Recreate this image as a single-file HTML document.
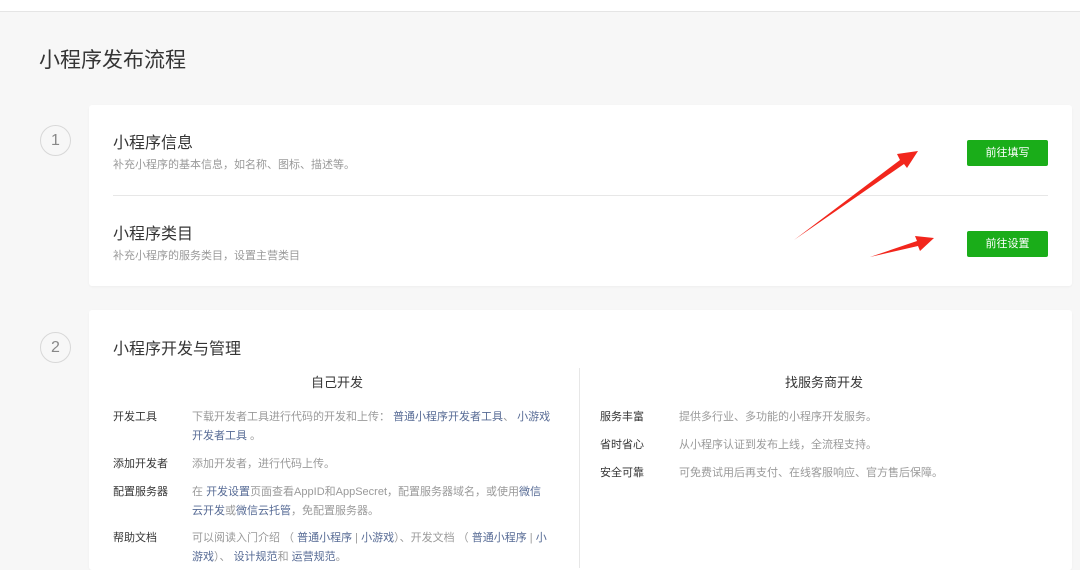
<!DOCTYPE html>
<html><head><meta charset="utf-8"><style>
*{margin:0;padding:0;box-sizing:border-box}
body{width:1080px;height:555px;overflow:hidden;background:#f7f7f7;font-family:"Liberation Sans","Noto Sans CJK SC",sans-serif;position:relative;color:#353535}
.top{position:absolute;left:0;top:0;width:1080px;height:12px;background:#fff;border-bottom:1px solid #e5e5e5}
h1{position:absolute;left:39px;top:44px;font-size:21px;font-weight:normal;color:#353535}
.num{position:absolute;left:40px;width:31px;height:31px;border:1px solid #d8d8d8;border-radius:50%;text-align:center;line-height:29px;font-size:16px;color:#888;background:#f7f7f7}
.card{position:absolute;left:89px;width:983px;background:#fff;border-radius:3px;box-shadow:0 1px 2px rgba(0,0,0,.04)}
.t{position:absolute;font-size:16px;color:#353535}
.d{position:absolute;font-size:11px;color:#9a9a9a}
.btn{position:absolute;left:878px;width:81px;height:26px;background:#1aad19;color:#fff;font-size:11px;text-align:center;line-height:26px;border-radius:2px}
.s{position:absolute;font-size:11px;color:#353535;line-height:19px}
.g{position:absolute;font-size:11px;color:#9a9a9a;line-height:19px}
a{color:#576b95;text-decoration:none}
</style></head><body>
<div class="top"></div>
<h1>小程序发布流程</h1>
<div class="num" style="top:125px">1</div>
<div class="num" style="top:332px">2</div>
<div class="card" style="top:105px;height:181px">
 <div class="t" style="left:24px;top:24px">小程序信息</div>
 <div class="d" style="left:24px;top:51px">补充小程序的基本信息，如名称、图标、描述等。</div>
 <div class="btn" style="top:35px">前往填写</div>
 <div style="position:absolute;left:24px;right:24px;top:90px;border-top:1px solid #e7e7e7"></div>
 <div class="t" style="left:24px;top:115px">小程序类目</div>
 <div class="d" style="left:24px;top:142px">补充小程序的服务类目，设置主营类目</div>
 <div class="btn" style="top:126px">前往设置</div>
</div>
<div class="card" style="top:310px;height:260px">
 <div class="t" style="left:24px;top:25px">小程序开发与管理</div>
 <div style="position:absolute;left:490px;top:58px;height:200px;border-left:1px solid #e7e7e7"></div>
 <div style="position:absolute;left:222px;top:62px;font-size:13px">自己开发</div>
 <div style="position:absolute;left:696px;top:62px;font-size:13px">找服务商开发</div>
 <div class="s" style="left:24px;top:98px">开发工具</div>
 <div class="g" style="left:103px;top:98px;width:362px">下载开发者工具进行代码的开发和上传： <a>普通小程序开发者工具</a>、 <a>小游戏开发者工具</a> 。</div>
 <div class="s" style="left:24px;top:145px">添加开发者</div>
 <div class="g" style="left:103px;top:145px">添加开发者，进行代码上传。</div>
 <div class="s" style="left:24px;top:173px">配置服务器</div>
 <div class="g" style="left:103px;top:173px;width:358px">在 <a>开发设置</a>页面查看AppID和AppSecret，配置服务器域名，或使用<a>微信云开发</a>或<a>微信云托管</a>，免配置服务器。</div>
 <div class="s" style="left:24px;top:219px">帮助文档</div>
 <div class="g" style="left:103px;top:219px;width:365px">可以阅读入门介绍 （ <a>普通小程序</a> | <a>小游戏</a>）、开发文档 （ <a>普通小程序</a> | <a>小游戏</a>）、 <a>设计规范</a>和 <a>运营规范</a>。</div>
 <div class="s" style="left:511px;top:98px">服务丰富</div>
 <div class="g" style="left:590px;top:98px">提供多行业、多功能的小程序开发服务。</div>
 <div class="s" style="left:511px;top:126px">省时省心</div>
 <div class="g" style="left:590px;top:126px">从小程序认证到发布上线，全流程支持。</div>
 <div class="s" style="left:511px;top:154px">安全可靠</div>
 <div class="g" style="left:590px;top:154px">可免费试用后再支付、在线客服响应、官方售后保障。</div>
</div>
<svg style="position:absolute;left:0;top:0" width="1080" height="555">
 <polygon points="794,240 900,160 897,154 918,151 907,168 904,164" fill="#f2261c"/>
 <polygon points="870,257 917,241 915,236 934,238 920,251 918,246" fill="#f2261c"/>
</svg>
</body></html>
